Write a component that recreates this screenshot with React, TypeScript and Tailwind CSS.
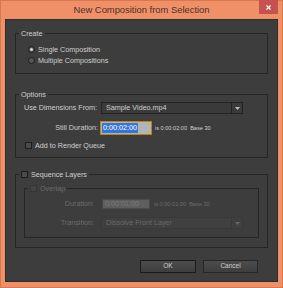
import { X } from 'lucide-react';

const font = { fontFamily: '"Liberation Sans", Arial, sans-serif' };

function Radio({ checked, label }: { checked?: boolean; label: string }) {
  return (
    <div className="flex items-center gap-[3px] h-[11px]">
      <span className="w-[7px] h-[7px] rounded-full border border-[#1e1e1e] bg-[#555] flex items-center justify-center">
        {checked && <span className="w-[3px] h-[3px] rounded-full bg-[#d8d8d8]" />}
      </span>
      <span className="text-[7.2px] text-[#cfcfcf] leading-none whitespace-nowrap">{label}</span>
    </div>
  );
}

function Check({ label, disabled }: { label: string; disabled?: boolean }) {
  return (
    <div className="flex items-center gap-[3px]">
      <span
        className={`w-[7px] h-[7px] border ${disabled ? 'border-[#363636] bg-[#444]' : 'border-[#1e1e1e] bg-[#4a4a4a]'}`}
      />
      <span className={`text-[7.2px] leading-none whitespace-nowrap ${disabled ? 'text-[#6c6c6c]' : 'text-[#cfcfcf]'}`}>{label}</span>
    </div>
  );
}

function Select({ value, disabled }: { value: string; disabled?: boolean }) {
  return (
    <div
      className={`w-[142px] h-[12px] flex border ${disabled ? 'border-[#393939] bg-[#404040]' : 'border-[#232323] bg-[#3a3a3a]'}`}
    >
      <span className={`flex-1 pl-[4px] text-[7.2px] leading-[10px] whitespace-nowrap ${disabled ? 'text-[#686868]' : 'text-[#cfcfcf]'}`}>
        {value}
      </span>
      <span className={`w-[11px] flex items-center justify-center border-l ${disabled ? 'border-[#393939]' : 'border-[#232323]'}`}>
        <svg width="5" height="3" viewBox="0 0 5 3">
          <path d="M0 0h5L2.5 3z" fill={disabled ? '#666' : '#bbb'} />
        </svg>
      </span>
    </div>
  );
}

function Group({ legend, children, className }: { legend: React.ReactNode; children: React.ReactNode; className: string }) {
  return (
    <div className={`relative border border-[#262626] ${className}`}>
      <div className="absolute -top-[6px] left-[3px] px-[2px] bg-[#3d3d3d] flex items-center h-[11px]">{legend}</div>
      {children}
    </div>
  );
}

const label = 'text-[7.2px] leading-none whitespace-nowrap';

export default function App() {
  return (
    <div className="w-[283px] h-[288px] bg-[#ef9068] border border-[#d7784f] flex flex-col" style={font}>
      <div className="h-[18px] relative flex items-center justify-center">
        <span className="text-[9.4px] text-[#4b3128] mt-[1px]">New Composition from Selection</span>
        <div className="absolute -top-px right-[4px] w-[19px] h-[14px] bg-[#c75050] flex items-center justify-center">
          <X className="w-[7px] h-[7px] text-white" strokeWidth={4} />
        </div>
      </div>
      <div className="flex-1 mx-[4px] mb-[5px] bg-[#3d3d3d] border border-[#2e2e2e] flex flex-col px-[9px] pt-[13px]">
        <Group legend={<span className={`${label} text-[#cfcfcf]`}>Create</span>} className="h-[41px] pl-[12px] pt-[10px]">
          <Radio checked label="Single Composition" />
          <Radio label="Multiple Compositions" />
        </Group>

        <Group legend={<span className={`${label} text-[#cfcfcf]`}>Options</span>} className="mt-[20px] h-[64px] pt-[7px]">
          <div className="flex items-center">
            <span className={`w-[82px] pl-[8px] ${label} text-[#cfcfcf]`}>Use Dimensions From:</span>
            <div className="ml-[3px]">
              <Select value="Sample Video.mp4" />
            </div>
          </div>
          <div className="flex items-center mt-[7px]">
            <span className={`w-[82px] text-right ${label} text-[#cfcfcf]`}>Still Duration:</span>
            <div className="ml-[2px] w-[52px] h-[14px] border border-[#b8860b] bg-[#b4b4b4] flex items-center px-[1px]">
              <span className="bg-[#3874d8] text-white text-[7.2px] leading-[10px] px-[1px]">0:00:02:00</span>
            </div>
            <span className="ml-[3px] text-[5.6px] text-[#cfcfcf] whitespace-nowrap">is 0:00:02:00&nbsp;&nbsp;Base 30</span>
          </div>
          <div className="mt-[7px] pl-[9px]">
            <Check label="Add to Render Queue" />
          </div>
        </Group>

        <Group legend={<Check label="Sequence Layers" />} className="mt-[16px] h-[74px] px-[8px] pt-[13px]">
          <Group legend={<Check label="Overlap" disabled />} className="h-[50px] border-[#2c2c2c] pt-[10px]">
            <div className="flex items-center">
              <span className={`w-[69px] text-right ${label} text-[#6c6c6c]`}>Duration:</span>
              <div className="ml-[8px] w-[48px] h-[10px] border border-[#4a4a4a] bg-[#5e5e5e] flex items-center pl-[2px]">
                <span className="text-[7.2px] leading-none text-[#7c7c7c]">0:00:01:00</span>
              </div>
              <span className="ml-[4px] text-[5.6px] text-[#6c6c6c] whitespace-nowrap">is 0:00:01:00&nbsp;&nbsp;Base 30</span>
            </div>
            <div className="flex items-center mt-[8px]">
              <span className={`w-[69px] text-right ${label} text-[#6c6c6c]`}>Transition:</span>
              <div className="ml-[7px]">
                <Select value="Dissolve Front Layer" disabled />
              </div>
            </div>
          </Group>
        </Group>

        <div className="mt-[12px] flex justify-end gap-[7px] pr-[10px]">
          <button className="w-[56px] h-[13px] border border-[#1a1a1a] bg-gradient-to-b from-[#4c4c4c] to-[#3e3e3e] text-[6.5px] text-[#cfcfcf] leading-none">
            OK
          </button>
          <button className="w-[55px] h-[13px] border border-[#262626] bg-gradient-to-b from-[#4c4c4c] to-[#3e3e3e] text-[6.5px] text-[#cfcfcf] leading-none">
            Cancel
          </button>
        </div>
      </div>
    </div>
  );
}
